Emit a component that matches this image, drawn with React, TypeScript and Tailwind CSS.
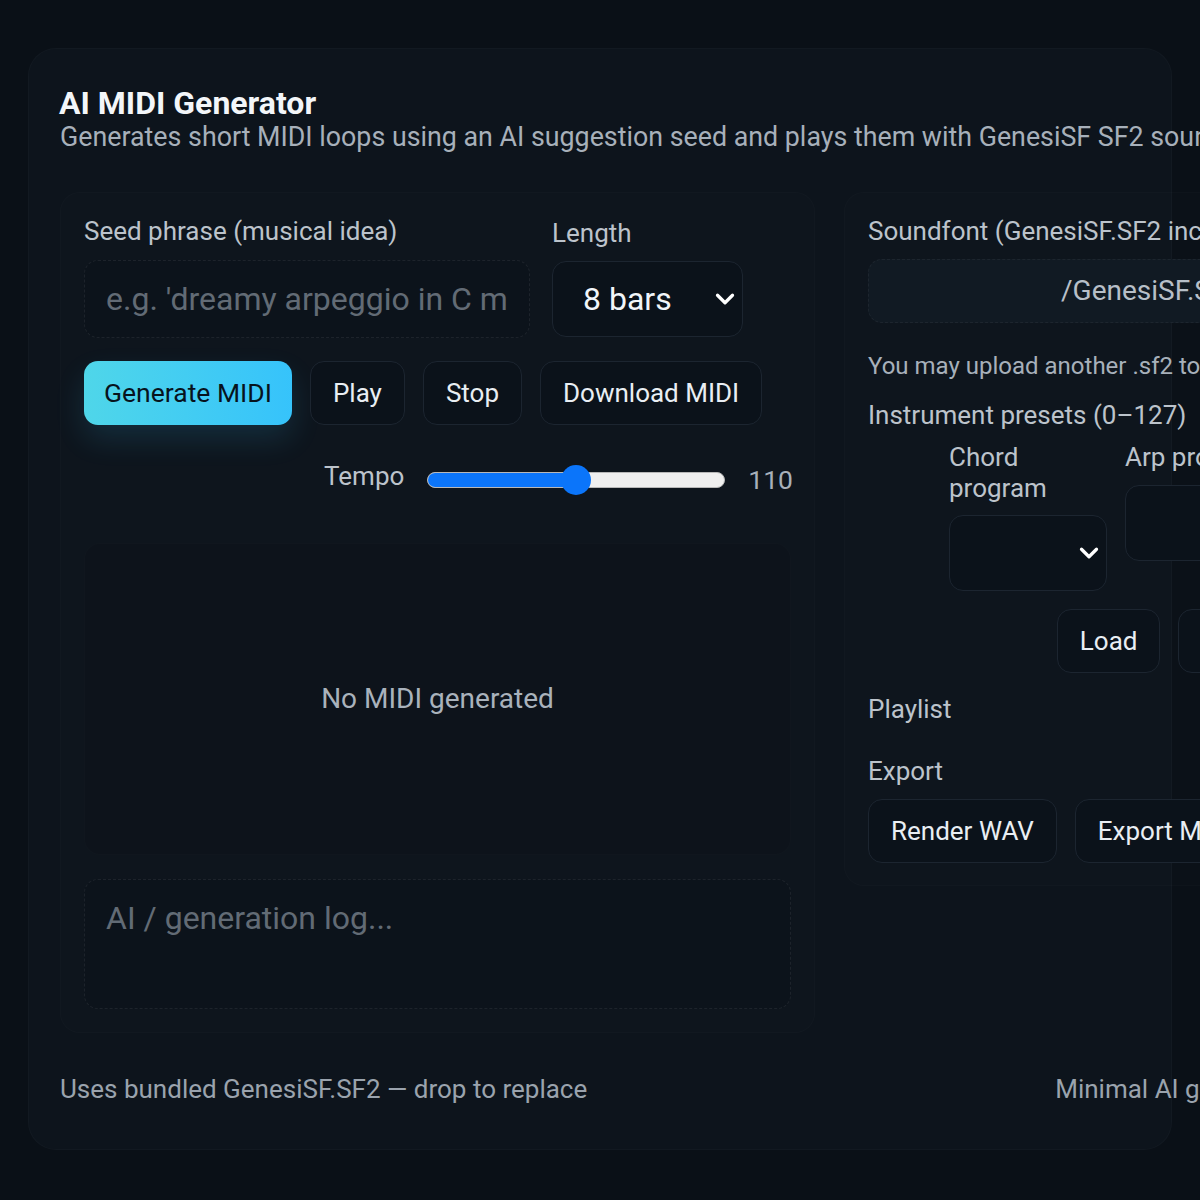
import React from 'react';
import { ChevronDown } from 'lucide-react';

const btn =
  'h-[64px] px-[22px] rounded-[14px] border border-[#1c2530] bg-[#0b121a] text-[26px] text-[#e9eef3] leading-none flex items-center whitespace-nowrap';

function Select({ value, className }: { value?: string; className?: string }) {
  return (
    <div className={`flex items-center justify-between rounded-[14px] border border-[#1c2530] bg-[#0b121a] pl-[30px] pr-[2px] ${className ?? ''}`}>
      <span className="text-[32px] text-[#f1f5f9]">{value}</span>
      <ChevronDown size={30} strokeWidth={2.6} className="text-white" />
    </div>
  );
}

function TempoSlider({ pct }: { pct: number }) {
  return (
    <div className="relative w-[298px] h-[30px] flex items-center">
      <div className="w-full h-[16px] rounded-full bg-[#efefef] border border-[#b8b8b8] overflow-hidden">
        <div className="h-full bg-[#0b75fa]" style={{ width: `${pct}%` }} />
      </div>
      <div
        className="absolute top-0 w-[30px] h-[30px] rounded-full bg-[#0b75fa]"
        style={{ left: `calc(${pct}% - 15px)` }}
      />
    </div>
  );
}

export default function App() {
  return (
    <div className="w-[1200px] h-[1200px] overflow-hidden bg-[#0a1017] font-['Roboto',sans-serif]">
      <div className="ml-[28px] mt-[48px] w-[1144px] h-[1102px] rounded-[28px] border border-white/[0.025] bg-[#0d141c] pl-[31px] pt-[37px]">
        <div className="w-[1254px]">
          <h1 className="text-[32px] leading-[34px] font-bold text-[#f3f6f9] -ml-[1px]">AI MIDI Generator</h1>
          <p className="text-[26.8px] leading-[34px] text-[#a7b0ba] whitespace-nowrap">
            Generates short MIDI loops using an AI suggestion seed and plays them with GenesiSF SF2 soundfont
          </p>

          <div className="mt-[38px] flex items-start gap-[29px]">
            {/* left: generator */}
            <section className="w-[755px] shrink-0 rounded-[20px] border border-white/[0.015] bg-white/[0.008] px-[23px] pt-[23px] pb-[23px]">
              <div className="flex gap-[22px]">
                <div className="w-[446px]">
                  <div className="text-[26px] leading-[30px] text-[#bcc3cb]">Seed phrase (musical idea)</div>
                  <div className="mt-[14px] h-[78px] rounded-[14px] border border-dashed border-white/[0.07] bg-[#0c131b] px-[21px] flex items-center">
                    <div className="w-full overflow-hidden">
                      <span className="text-[32px] text-[#626b75] whitespace-nowrap">e.g. 'dreamy arpeggio in C minor'</span>
                    </div>
                  </div>
                </div>
                <div className="w-[191px]">
                  <div className="text-[26px] leading-[30px] text-[#bcc3cb] mt-[2px]">Length</div>
                  <Select value="8 bars" className="mt-[13px] h-[76px]" />
                </div>
              </div>

              <div className="mt-[23px] flex gap-[18px]">
                <button className="h-[64px] px-[20px] rounded-[14px] bg-gradient-to-r from-[#4fd6e9] to-[#36c3fb] text-[26.5px] text-[#07131d] leading-none shadow-[0_14px_30px_rgba(56,189,248,0.14)]">
                  Generate MIDI
                </button>
                <button className={btn}>Play</button>
                <button className={btn}>Stop</button>
                <button className={btn}>Download MIDI</button>
              </div>

              <div className="mt-[35px] -mr-[2px] h-[40px] flex items-center justify-end gap-[23px]">
                <span className="text-[26px] text-[#bcc3cb] -mt-[8px]">Tempo</span>
                <TempoSlider pct={50} />
                <span className="text-[26.5px] text-[#a7b0ba]">110</span>
              </div>

              <div className="mt-[43px] h-[312px] rounded-[16px] border border-white/[0.012] bg-black/[0.06] flex items-center justify-center">
                <span className="text-[28px] text-[#a9b2bc]">No MIDI generated</span>
              </div>

              <div className="mt-[24px] h-[130px] rounded-[14px] border border-dashed border-white/[0.07] bg-[#0c131b] px-[21px] pt-[19px]">
                <span className="text-[32px] leading-[38px] text-[#626b75]">AI / generation log...</span>
              </div>
            </section>

            {/* right: soundfont + export */}
            <section className="w-[470px] shrink-0 rounded-[20px] border border-white/[0.015] bg-white/[0.008] px-[23px] pt-[23px] pb-[22px]">
              <div className="text-[26px] leading-[30px] text-[#bcc3cb] whitespace-nowrap">Soundfont (GenesiSF.SF2 included)</div>
              <div className="mt-[13px] h-[64px] rounded-[14px] border border-dashed border-white/[0.05] bg-[#111a23] pl-[192px] flex items-center overflow-hidden">
                <span className="text-[28px] text-[#b7bfc8] whitespace-nowrap">/GenesiSF.SF2</span>
              </div>

              <div className="mt-[28px] text-[24px] leading-[30px] text-[#a7b0ba] whitespace-nowrap">You may upload another .sf2 to replace it</div>
              <div className="mt-[19px] text-[26px] leading-[30px] text-[#bcc3cb]">Instrument presets (0–127)</div>

              <div className="mt-[12px] pl-[81px] flex gap-[18px]">
                <div className="w-[158px]">
                  <div className="text-[26px] leading-[31px] text-[#bcc3cb]">Chord program</div>
                  <Select className="mt-[11px] h-[76px]" />
                </div>
                <div className="w-[158px]">
                  <div className="text-[26px] leading-[31px] text-[#bcc3cb] whitespace-nowrap">Arp program</div>
                  <Select className="mt-[12px] h-[76px]" />
                </div>
              </div>

              <div className="mt-[18px] flex justify-end gap-[18px]">
                <button className={btn}>Load</button>
                <button className={btn}>Reset</button>
              </div>

              <div className="mt-[21px] text-[26px] leading-[30px] text-[#bcc3cb]">Playlist</div>
              <div className="mt-[32px] text-[26px] leading-[30px] text-[#bcc3cb]">Export</div>
              <div className="mt-[13px] flex gap-[18px]">
                <button className={btn}>Render WAV</button>
                <button className={btn}>Export MIDI</button>
              </div>
            </section>
          </div>

          <footer className="mt-[41px] flex justify-between text-[26px] leading-[30px] text-[#9aa3ad]">
            <span>Uses bundled GenesiSF.SF2 — drop to replace</span>
            <span className="mr-[18px]">Minimal AI generator</span>
          </footer>
        </div>
      </div>
    </div>
  );
}
